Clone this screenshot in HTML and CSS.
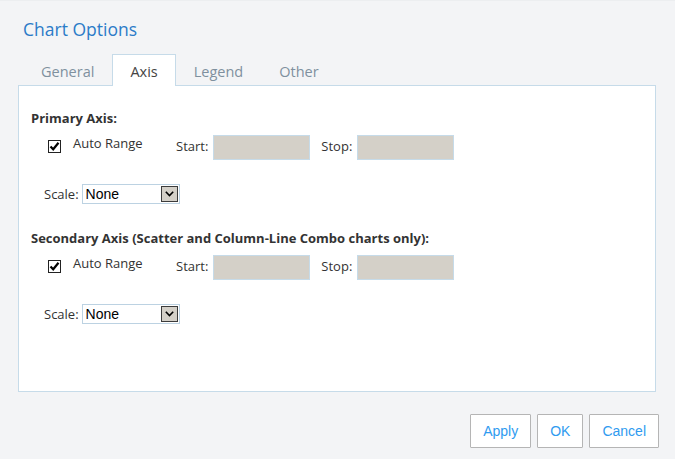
FILE: index.html
```html
<!DOCTYPE html>
<html lang="en">
<head>
<meta charset="utf-8">
<title>Chart Options</title>
<link rel="stylesheet" href="styles.css">
</head>
<body>
<div class="dialog">
  <h1 class="title">Chart Options</h1>
  <div class="tabs">
    <div class="tab">General</div>
    <div class="tab active">Axis</div>
    <div class="tab">Legend</div>
    <div class="tab">Other</div>
  </div>
  <div class="panel">
    <section class="axis">
      <h2 class="axis-title">Primary Axis:</h2>
      <div class="range-row">
        <span class="check"><svg width="11" height="11" viewBox="0 0 11 11"><path d="M1.5 5.5 L4.2 8.3 L9.5 1.8" fill="none" stroke="#000" stroke-width="2.2"/></svg></span>
        <span class="auto-label">Auto Range</span>
        <span class="field-label">Start:</span>
        <span class="field"></span>
        <span class="field-label">Stop:</span>
        <span class="field"></span>
      </div>
      <div class="scale-row">
        <span class="scale-label">Scale:</span>
        <span class="select"><span class="select-value">None</span><span class="select-btn"><svg width="9" height="6" viewBox="0 0 9 6"><path d="M0.8 0.8 L4.5 4.6 L8.2 0.8" fill="none" stroke="#000" stroke-width="1.6"/></svg></span></span>
      </div>
    </section>
    <section class="axis second">
      <h2 class="axis-title">Secondary Axis (Scatter and Column-Line Combo charts only):</h2>
      <div class="range-row">
        <span class="check"><svg width="11" height="11" viewBox="0 0 11 11"><path d="M1.5 5.5 L4.2 8.3 L9.5 1.8" fill="none" stroke="#000" stroke-width="2.2"/></svg></span>
        <span class="auto-label">Auto Range</span>
        <span class="field-label">Start:</span>
        <span class="field"></span>
        <span class="field-label">Stop:</span>
        <span class="field"></span>
      </div>
      <div class="scale-row">
        <span class="scale-label">Scale:</span>
        <span class="select"><span class="select-value">None</span><span class="select-btn"><svg width="9" height="6" viewBox="0 0 9 6"><path d="M0.8 0.8 L4.5 4.6 L8.2 0.8" fill="none" stroke="#000" stroke-width="1.6"/></svg></span></span>
      </div>
    </section>
  </div>
  <div class="actions">
    <button class="btn">Apply</button>
    <button class="btn">OK</button>
    <button class="btn">Cancel</button>
  </div>
</div>
</body>
</html>
```

FILE: styles.css
```css
html, body {
  margin: 0;
  padding: 0;
}
body {
  background: #f3f4f6;
  width: 675px;
  height: 459px;
  overflow: hidden;
  font-family: "Open Sans", "Liberation Sans", sans-serif;
  color: #333;
}
.dialog {
  border-top: 1px solid #eceef0;
  padding: 0 16px 0 18px;
}
.title {
  margin: 16px 0 0 0;
  padding-left: 5px;
  font-size: 17.5px;
  line-height: 24px;
  font-weight: 400;
  color: #2b7bc8;
}
.tabs {
  display: flex;
  margin-top: 13px;
  padding-left: 5px;
}
.tab {
  padding: 7px 17px 4px;
  border: 1px solid transparent;
  border-bottom: none;
  font-size: 14.5px;
  line-height: 20px;
  color: #7f909e;
  margin-bottom: -1px;
}
.tab.active {
  position: relative;
  z-index: 1;
  background: #fff;
  border-color: #c6dbe9;
  color: #444;
}
.panel {
  background: #fff;
  border: 1px solid #c6dbe9;
  margin-right: 3px;
  padding: 23px 12px 67px;
}
.axis.second {
  margin-top: 25px;
}
.axis-title {
  margin: 0;
  font-size: 13px;
  line-height: 18px;
  font-weight: 700;
  color: #333;
}
.range-row {
  display: flex;
  align-items: flex-start;
  margin-top: 8px;
  padding-left: 17px;
  font-size: 13px;
  line-height: 18px;
}
.check {
  width: 11px;
  height: 11px;
  border: 1px solid #222;
  background: #fff;
  margin-top: 5px;
  display: flex;
}
.auto-label {
  margin-left: 12px;
  width: 103px;
  margin-top: -1px;
}
.field-label {
  margin-top: 2px;
  margin-right: 5px;
}
.field {
  width: 95px;
  height: 23px;
  border: 1px solid #c6dbe9;
  background: #d4d0c8;
  margin-right: 11px;
}
.scale-row {
  display: flex;
  align-items: center;
  margin-top: 24px;
  padding-left: 13px;
  font-size: 13px;
  line-height: 18px;
}
.scale-label {
  margin-right: 3px;
}
.select {
  box-sizing: border-box;
  width: 98px;
  height: 20px;
  border: 1px solid #bcd2e2;
  background: #fff;
  display: flex;
  align-items: center;
  justify-content: space-between;
  padding: 0 1px 0 3px;
}
.select-value {
  font-family: "Liberation Sans", Arial, sans-serif;
  font-size: 14px;
  line-height: 18px;
  color: #000;
}
.select-btn {
  box-sizing: border-box;
  width: 17px;
  height: 16px;
  background: #d4d0c8;
  border: 1px solid #3c3c3c;
  display: flex;
  align-items: center;
  justify-content: center;
}
.actions {
  display: flex;
  justify-content: flex-end;
  gap: 6px;
  margin-top: 22px;
}
.btn {
  height: 34px;
  padding: 0 12px;
  border: 1px solid #b5b5b5;
  border-radius: 1px;
  background: #fff;
  font-family: "Liberation Sans", Arial, sans-serif;
  font-size: 14px;
  color: #2f9bf0;
}
```
